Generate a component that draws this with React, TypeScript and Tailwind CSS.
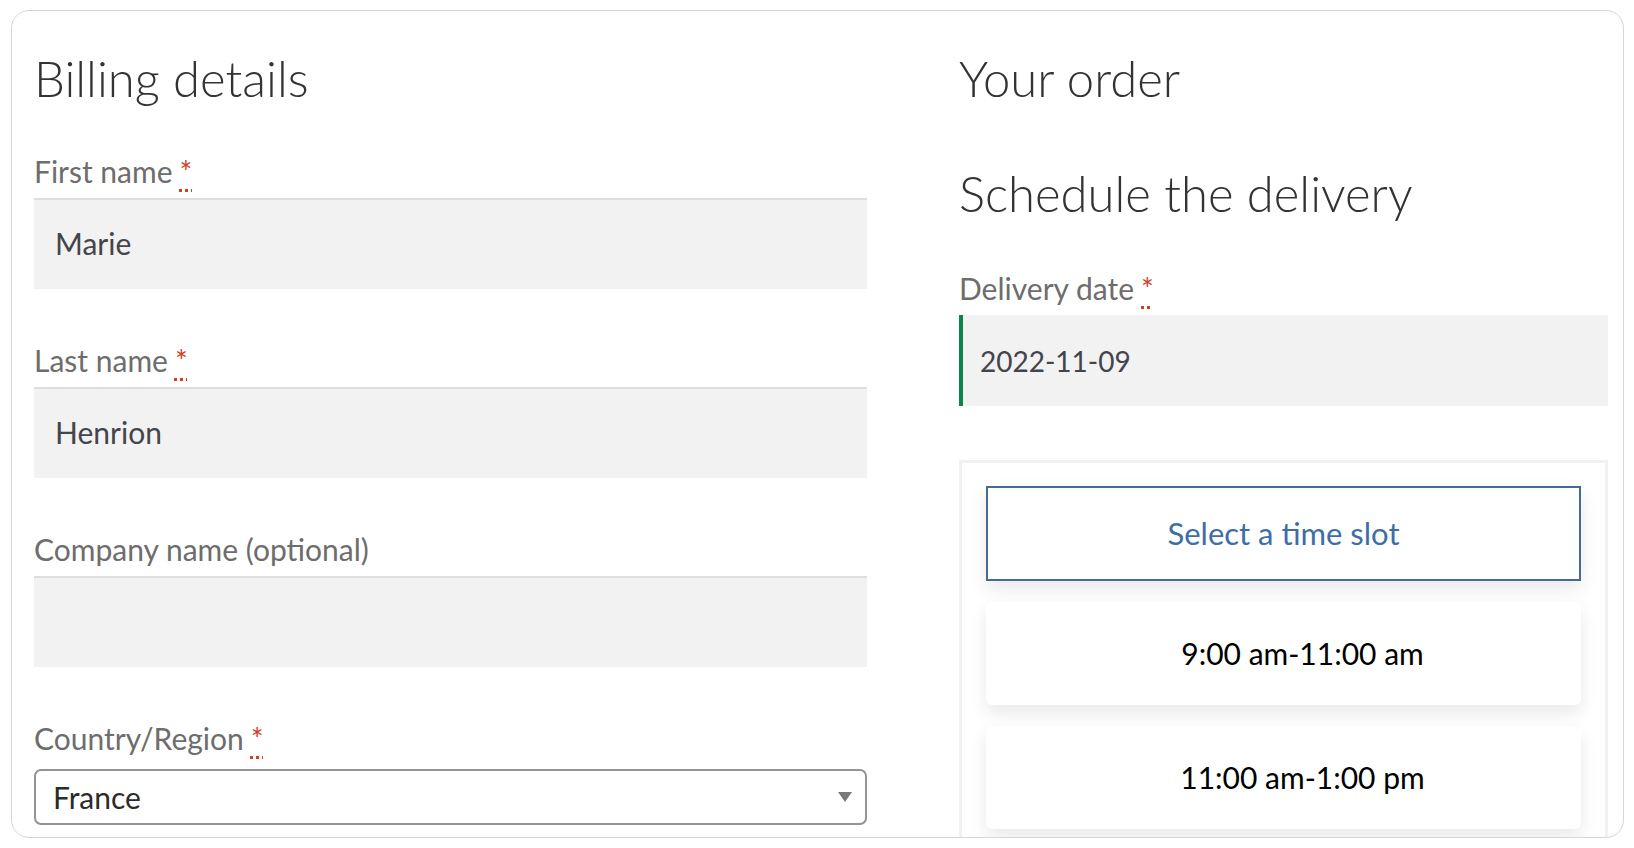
import * as React from "react";

const FONT = "font-['Lato','Noto_Sans',sans-serif]";

function Required() {
  return (
    <abbr
      title="required"
      className="ml-[7px] text-[#d1401f] underline decoration-dotted decoration-[3px] underline-offset-[6px]"
    >
      *
    </abbr>
  );
}

function Label({ children, required }: { children: React.ReactNode; required?: boolean }) {
  return (
    <label className="mb-[9px] block text-[30px] leading-[36px] text-[#6d6d6d]">
      {children}
      {required && <Required />}
    </label>
  );
}

function TextField({ label, value, required }: { label: string; value: string; required?: boolean }) {
  return (
    <div className="mb-[53px]">
      <Label required={required}>{label}</Label>
      <div className="flex h-[91px] items-center bg-[#f2f2f2] pl-[21px] text-[30px] text-[#43454b] shadow-[inset_0_2px_0_#dedede]">
        {value}
      </div>
    </div>
  );
}

function SlotCard({ children }: { children: React.ReactNode }) {
  return (
    <div className="flex h-[103px] shrink-0 items-center justify-center rounded-[6px] bg-white pl-[38px] text-[30px] text-black shadow-[0_8px_18px_rgba(0,0,0,0.09)]">
      {children}
    </div>
  );
}

export default function App() {
  return (
    <div className={`${FONT} h-[848px] w-[1634px] overflow-hidden bg-white pl-[11px] pt-[10px]`}>
      <div className="flex h-[828px] w-[1613px] overflow-hidden rounded-[18px] border border-[#d6d6d6] pl-[22px] pr-[15px] pt-[37px]">
        {/* billing */}
        <div className="w-[833px] shrink-0">
          <h3 className="mb-[45px] text-[49px] font-light leading-[60px] text-[#333333]">Billing details</h3>
          <TextField label="First name" value="Marie" required />
          <TextField label="Last name" value="Henrion" required />
          <TextField label="Company name (optional)" value="" />
          <div>
            <Label required>Country/Region</Label>
            <div className="mt-[13px] flex h-[56px] items-center justify-between rounded-[7px] border-2 border-[#949494] pl-[17px] pr-[12px] text-[30px] text-[#2b2b2b]">
              <span>France</span>
              <svg width="16" height="12" viewBox="0 0 16 12">
                <path d="M1 1h14L8 11z" fill="#7a7a7a" />
              </svg>
            </div>
          </div>
        </div>

        {/* order */}
        <div className="ml-[92px] flex-1">
          <h3 className="mb-[55px] text-[49px] font-light leading-[60px] text-[#333333]">Your order</h3>
          <h3 className="mb-[47px] text-[49px] font-light leading-[60px] text-[#333333]">Schedule the delivery</h3>
          <Label required>Delivery date</Label>
          <div className="flex h-[91px] items-center border-l-4 border-[#0f834d] bg-[#f2f2f2] pl-[17px] text-[28px] text-[#43454b]">
            2022-11-09
          </div>

          <div className="mt-[54px] border-[3px] border-[#f1f1f1] px-[24px] pb-[80px] pt-[23px]">
            <button className="mb-[21px] flex h-[95px] w-full items-center justify-center border-2 border-[#426c96] bg-white text-[31px] text-[#3d6ea6] shadow-[0_8px_18px_rgba(0,0,0,0.09)]">
              Select a time slot
            </button>
            <div className="flex flex-col gap-[21px]">
              <SlotCard>9:00 am-11:00 am</SlotCard>
              <SlotCard>11:00 am-1:00 pm</SlotCard>
            </div>
          </div>
        </div>
      </div>
    </div>
  );
}
